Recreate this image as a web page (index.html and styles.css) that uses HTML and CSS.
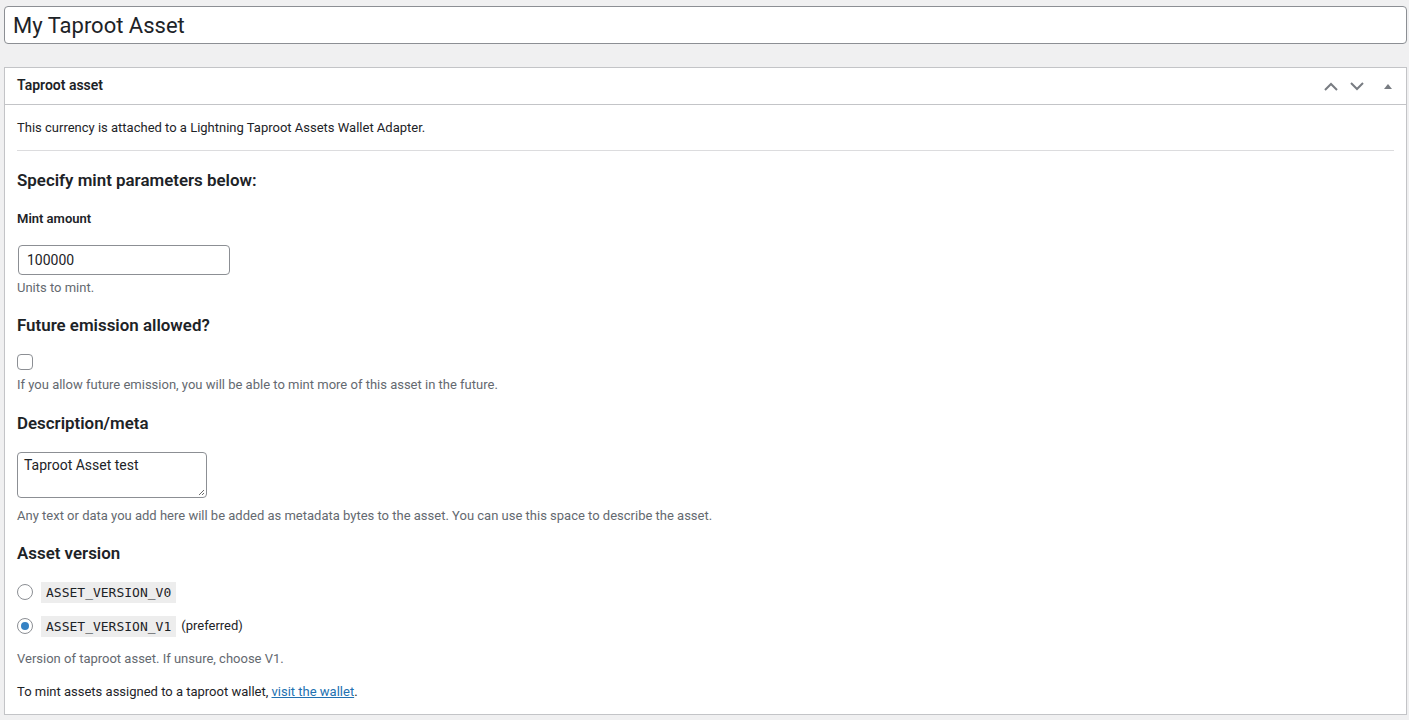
FILE: index.html
```html
<!DOCTYPE html>
<html>
<head>
<meta charset="utf-8">
<link rel="stylesheet" href="styles.css">
</head>
<body>
<div class="wrap">
  <div class="title-wrap">
    <input class="title-input" type="text" value="My Taproot Asset">
  </div>
  <div class="postbox">
    <div class="postbox-header">
      <h2 class="hndle">Taproot asset</h2>
      <div class="handle-actions">
        <span class="hbtn">
          <svg width="14" height="9" viewBox="0 0 14 9"><path d="M1 8 L7 2 L13 8" fill="none" stroke="#787c82" stroke-width="2"/></svg>
        </span>
        <span class="hbtn">
          <svg width="14" height="9" viewBox="0 0 14 9"><path d="M1 1 L7 7 L13 1" fill="none" stroke="#787c82" stroke-width="2"/></svg>
        </span>
        <span class="hbtn toggle">
          <svg width="10" height="6" viewBox="0 0 10 6"><path d="M1 6 L5 1 L9 6 Z" fill="#787c82"/></svg>
        </span>
      </div>
    </div>
    <div class="inside">
      <p class="intro">This currency is attached to a Lightning Taproot Assets Wallet Adapter.</p>
      <hr class="sep">
      <h3 class="sec-title first">Specify mint parameters below:</h3>
      <label class="field-label">Mint amount</label>
      <input class="num-input" type="text" value="100000">
      <p class="desc desc-units">Units to mint.</p>

      <h3 class="sec-title sec-future">Future emission allowed?</h3>
      <span class="checkbox"></span>
      <p class="desc desc-check">If you allow future emission, you will be able to mint more of this asset in the future.</p>

      <h3 class="sec-title">Description/meta</h3>
      <div class="textarea">Taproot Asset test
        <svg class="grip" width="7" height="7" viewBox="0 0 7 7"><path d="M6 1 L1 6 M6 4 L4 6" stroke="#6b6b6b" stroke-width="1"/></svg>
      </div>
      <p class="desc desc-text">Any text or data you add here will be added as metadata bytes to the asset. You can use this space to describe the asset.</p>

      <h3 class="sec-title sec-version">Asset version</h3>
      <div class="radio-row first-row">
        <span class="radio"></span>
        <code class="code">ASSET_VERSION_V0</code>
      </div>
      <div class="radio-row">
        <span class="radio checked"></span>
        <code class="code">ASSET_VERSION_V1</code>
        <span class="pref">(preferred)</span>
      </div>
      <p class="desc desc-version">Version of taproot asset. If unsure, choose V1.</p>
      <p class="outro">To mint assets assigned to a taproot wallet, <a href="#" class="link">visit the wallet</a>.</p>
    </div>
  </div>
</div>
</body>
</html>
```

FILE: styles.css
```css
html, body {
  margin: 0;
  padding: 0;
  background: #f0f0f1;
  font-family: Roboto, "Liberation Sans", sans-serif;
  color: #1d2327;
  font-size: 13px;
}

.wrap {
  padding: 6px 2px 0 4px;
  width: 1403px;
}

.title-wrap {
  margin-bottom: 23px;
}

.title-input {
  display: block;
  box-sizing: border-box;
  width: 100%;
  height: 38px;
  margin: 0;
  padding: 3px 8px;
  border: 1px solid #8c8f94;
  border-radius: 4px;
  background: #fff;
  font-family: Roboto, "Liberation Sans", sans-serif;
  font-size: 22px;
  color: #1d2327;
  outline: none;
}

.postbox {
  background: #fff;
  border: 1px solid #c3c4c7;
  box-shadow: 0 1px 1px rgba(0,0,0,.04);
}

.postbox-header {
  display: flex;
  align-items: center;
  justify-content: space-between;
  height: 36px;
  border-bottom: 1px solid #c3c4c7;
}

.hndle {
  margin: 0;
  padding: 0 12px;
  font-size: 14px;
  font-weight: 600;
  line-height: 1.4;
}

.handle-actions {
  display: flex;
  align-items: center;
  height: 36px;
  padding-right: 0;
}

.hbtn {
  display: flex;
  align-items: center;
  justify-content: center;
  width: 26px;
  height: 36px;
}

.hbtn.toggle {
  width: 36px;
}

.inside {
  padding: 0 12px 12px;
}

.intro {
  margin: 13px 0 0;
  line-height: 20px;
}

.sep {
  margin: 12px 0 0;
  border: 0;
  border-top: 1px solid #dcdcde;
  height: 0;
}

.sec-title {
  margin: 16px 0 0;
  font-size: 16.9px;
  font-weight: 600;
  line-height: 24px;
}

.sec-title.first { margin-top: 17px; }
.sec-title.sec-future { margin-top: 15px; }
.sec-title.sec-version { margin-top: 15px; }

.field-label {
  display: block;
  margin-top: 17px;
  font-weight: 600;
  line-height: 20px;
}

.num-input {
  display: block;
  box-sizing: border-box;
  width: 212px;
  height: 30px;
  margin: 16px 0 0 1px;
  padding: 0 8px;
  border: 1px solid #8c8f94;
  border-radius: 4px;
  font-family: Roboto, "Liberation Sans", sans-serif;
  font-size: 14px;
  color: #1d2327;
  outline: none;
}

.desc {
  margin: 0;
  color: #646970;
  line-height: 20px;
}

.desc-units { margin-top: 3px; }
.desc-check { margin-top: 5px; }
.desc-text { margin-top: 8px; }
.desc-version { margin-top: 11px; }

.checkbox {
  display: block;
  box-sizing: border-box;
  width: 16px;
  height: 16px;
  margin-top: 17px;
  border: 1px solid #8c8f94;
  border-radius: 4px;
  background: #fff;
}

.textarea {
  position: relative;
  box-sizing: border-box;
  width: 190px;
  height: 46px;
  margin-top: 17px;
  padding: 2px 6px;
  border: 1px solid #8c8f94;
  border-radius: 4px;
  font-size: 14px;
  line-height: 20px;
  color: #1d2327;
}

.grip {
  position: absolute;
  right: 1px;
  bottom: 1px;
}

.radio-row {
  display: flex;
  align-items: center;
  height: 24px;
  margin-top: 10px;
}

.radio-row.first-row {
  margin-top: 15px;
}

.radio {
  box-sizing: border-box;
  width: 16px;
  height: 16px;
  border: 1px solid #8c8f94;
  border-radius: 50%;
  background: #fff;
  display: flex;
  align-items: center;
  justify-content: center;
  margin-right: 8px;
}

.radio.checked::after {
  content: "";
  width: 8px;
  height: 8px;
  border-radius: 50%;
  background: #3582c4;
}

.code {
  display: inline-block;
  padding: 3px 5px 2px;
  background: rgba(0,0,0,.07);
  font-family: "DejaVu Sans Mono", "Liberation Mono", monospace;
  font-size: 13px;
  line-height: 16px;
  color: #1d2327;
}

.pref {
  margin-left: 5px;
  line-height: 20px;
}

.outro {
  margin: 13px 0 0;
  line-height: 20px;
}

.link {
  color: #2271b1;
  text-decoration: underline;
}
```
